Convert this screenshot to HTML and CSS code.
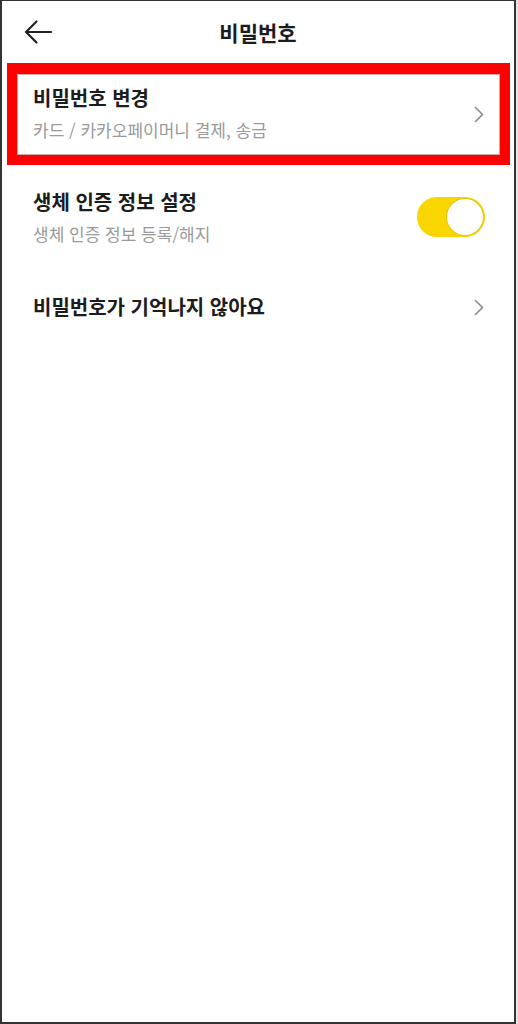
FILE: index.html
```html
<!DOCTYPE html>
<html lang="ko">
<head>
<meta charset="utf-8">
<title>비밀번호</title>
<link rel="stylesheet" href="styles.css">
</head>
<body>
<div class="frame">
  <header class="topbar">
    <div class="back">
      <svg width="30" height="26" viewBox="0 0 30 26"><path d="M28 13H3M13.5 2.5L3 13l10.5 10.5" fill="none" stroke="#222" stroke-width="2.2" stroke-linecap="round" stroke-linejoin="round"/></svg>
    </div>
    <h1 class="title">비밀번호</h1>
    <div></div>
  </header>

  <div class="row row-highlight">
    <div class="texts">
      <div class="row-title">비밀번호 변경</div>
      <div class="row-sub">카드 / 카카오페이머니 결제, 송금</div>
    </div>
    <svg class="chev" width="10" height="17" viewBox="0 0 10 17"><path d="M1.5 1.5L8.5 8.5L1.5 15.5" fill="none" stroke="#8a8a8a" stroke-width="1.6" stroke-linecap="round" stroke-linejoin="round"/></svg>
  </div>

  <div class="row row-plain">
    <div class="texts">
      <div class="row-title">생체 인증 정보 설정</div>
      <div class="row-sub">생체 인증 정보 등록/해지</div>
    </div>
    <div class="toggle"><div class="knob"></div></div>
  </div>

  <div class="row row-single">
    <div class="row-title">비밀번호가 기억나지 않아요</div>
    <svg class="chev" width="10" height="17" viewBox="0 0 10 17"><path d="M1.5 1.5L8.5 8.5L1.5 15.5" fill="none" stroke="#8a8a8a" stroke-width="1.6" stroke-linecap="round" stroke-linejoin="round"/></svg>
  </div>
</div>
</body>
</html>
```

FILE: styles.css
```css
html, body {
  margin: 0;
  padding: 0;
}
body {
  background: #e6e6e6;
  font-family: "Noto Sans CJK KR", "Noto Sans", sans-serif;
  color: #1c1c1c;
}
.frame {
  box-sizing: border-box;
  width: 516px;
  height: 1024px;
  border: 2px solid #333;
  border-top-width: 1px;
  background: #fff;
}
.topbar {
  height: 62px;
  display: grid;
  grid-template-columns: 1fr auto 1fr;
  align-items: center;
}
.back {
  padding-left: 21px;
  display: flex;
  align-items: center;
}
.back svg {
  display: block;
}
.title {
  margin: 0;
  font-size: 21px;
  font-weight: 700;
  line-height: 28px;
  color: #1c1c1c;
}
.row {
  display: flex;
  align-items: center;
  justify-content: space-between;
}
.texts {
  display: flex;
  flex-direction: column;
}
.row-title {
  font-size: 20px;
  font-weight: 700;
  line-height: 28px;
  color: #1c1c1c;
}
.row-sub {
  margin-top: 6px;
  font-size: 17px;
  line-height: 24px;
  color: #9a9a9a;
}
.row-highlight {
  margin: 0 4px 0 5px;
  height: 81px;
  box-sizing: content-box;
  border: 10px solid #ff0000;
  border-top-width: 11px;
  padding: 0 16px;
  box-shadow: inset 0 0 0 1px rgba(120, 0, 0, 0.35);
}
.row-highlight .texts {
  margin-top: -3px;
}
.row-plain {
  padding: 23px 29px 23px 31px;
}
.row-single {
  height: 76px;
  padding: 0 30px 0 31px;
}
.chev {
  display: block;
}
.toggle {
  box-sizing: border-box;
  width: 68px;
  height: 40px;
  border-radius: 20px;
  background: #f9d600;
  padding: 2px;
  display: flex;
  justify-content: flex-end;
  align-items: center;
}
.knob {
  width: 36px;
  height: 36px;
  border-radius: 50%;
  background: #fff;
  box-shadow: 0 0 0 1px rgba(200, 160, 0, 0.35);
}
```
